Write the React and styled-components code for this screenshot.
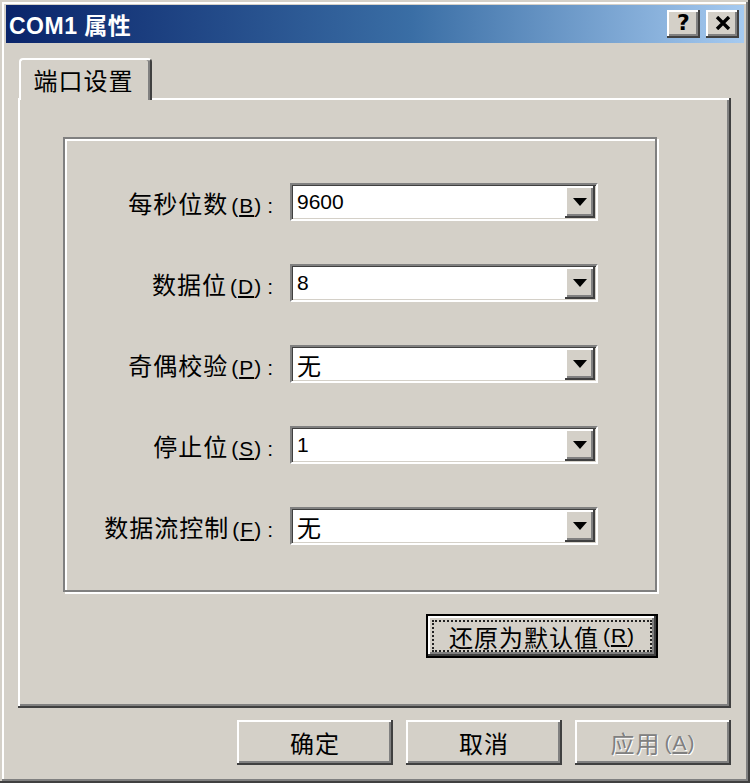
import React from "react";
import styled, { createGlobalStyle, css } from "styled-components";

const Global = createGlobalStyle`
  html, body { margin: 0; padding: 0; background: #d4d0c8; }
  body { font-family: "Liberation Sans", "Noto Sans CJK SC", sans-serif; color: #000; }
  * { box-sizing: border-box; }
`;

const raised = css`
  background: #d4d0c8;
  box-shadow: inset -2px -2px #404040, inset 2px 2px #ffffff,
    inset -4px -4px #808080, inset 4px 4px #d4d0c8;
`;

const Window = styled.div`
  width: 750px;
  height: 783px;
  display: flex;
  flex-direction: column;
  padding: 5px 6px 6px 6px;
  background: #d4d0c8;
  box-shadow: inset -2px -2px #404040, inset 2px 2px #d4d0c8,
    inset -4px -4px #808080, inset 4px 4px #ffffff;
`;

const TitleBar = styled.div`
  height: 38px;
  flex: none;
  display: flex;
  align-items: center;
  padding: 0 5px 0 3px;
  background: linear-gradient(to right, #0a246a 0%, #3a6ea5 55%, #a6caf0 100%);
`;

const Title = styled.div`
  flex: 1;
  color: #fff;
  font-weight: bold;
  font-size: 23px;
  letter-spacing: 0.5px;
  font-family: "Liberation Sans", "Noto Sans CJK SC", sans-serif;
`;

const CaptionButtons = styled.div`
  display: flex;
  gap: 6px;
`;

const CaptionButton = styled.div`
  ${raised};
  width: 33px;
  height: 28px;
  display: flex;
  align-items: center;
  justify-content: center;
  font-weight: bold;
  font-size: 22px;
  font-family: "DejaVu Sans", sans-serif;
  line-height: 1;
  padding-bottom: 2px;
`;

const Body = styled.div`
  flex: 1;
  display: flex;
  flex-direction: column;
  padding: 15px 13px 0 12px;
`;

const TabStrip = styled.div`
  display: flex;
  position: relative;
  z-index: 1;
  margin-bottom: -2px;
`;

const Tab = styled.div`
  width: 133px;
  height: 42px;
  margin-left: 1px;
  background: #d4d0c8;
  border-radius: 4px 4px 0 0;
  border-top: 2px solid #fff;
  border-left: 2px solid #fff;
  border-right: 2px solid #404040;
  box-shadow: inset -2px 0 #808080;
  display: flex;
  align-items: center;
  justify-content: center;
  font-family: "Noto Sans CJK SC", sans-serif;
  font-size: 24px;
  letter-spacing: 1px;
  padding: 0 4px 2px 0;
`;

const Panel = styled.div`
  height: 610px;
  flex: none;
  display: flex;
  flex-direction: column;
  padding: 39px 74px 50px 45px;
  box-shadow: inset -2px -2px #404040, inset 2px 2px #ffffff,
    inset -4px -4px #808080;
`;

const GroupBox = styled.div`
  border: 2px solid #808080;
  box-shadow: inset 2px 2px #fff, 2px 2px #fff;
  padding: 44px 57px 45px 0;
  display: grid;
  grid-template-columns: 1fr 308px;
  column-gap: 16px;
  row-gap: 43px;
  align-items: center;
`;

const Label = styled.label`
  justify-self: end;
  font-family: "Noto Sans CJK SC", sans-serif;
  font-size: 24px;
  letter-spacing: 1px;
  white-space: nowrap;
`;

const Key = styled.span`
  font-family: "Liberation Sans", sans-serif;
  font-size: 21px;
  margin-left: ${(p) => p.$gap ?? 3}px;
  letter-spacing: 1px;
  & u { text-underline-offset: 2px; }
`;

const Colon = styled.span`
  font-family: "Liberation Sans", sans-serif;
  font-size: 21px;
  margin-left: 5px;
`;

const Combo = styled.div`
  height: 38px;
  border: 2px solid;
  border-color: #808080 #ffffff #ffffff #808080;
  background: #fff;
  display: flex;
  box-shadow: inset 1px 1px #404040, inset -1px -1px #d4d0c8;
  padding: 1px;
`;

const ComboValue = styled.div`
  flex: 1;
  display: flex;
  align-items: center;
  padding-left: 4px;
  font-size: ${(p) => (p.$cjk ? 24 : 21)}px;
  font-family: "Liberation Sans", "Noto Sans CJK SC", sans-serif;
`;

const DropButton = styled.div`
  ${raised};
  width: 30px;
  display: flex;
  align-items: center;
  justify-content: center;
`;

const ActionRow = styled.div`
  display: flex;
  justify-content: flex-end;
  margin-top: 22px;
  margin-right: -1px;
`;

const PushButton = styled.div`
  ${raised};
  width: ${(p) => p.$w || 156}px;
  height: ${(p) => p.$h || 45}px;
  display: flex;
  align-items: center;
  justify-content: center;
  font-family: "Noto Sans CJK SC", sans-serif;
  font-size: 24px;
  letter-spacing: 1px;
  ${(p) =>
    p.$disabled &&
    css`
      color: #808080;
      text-shadow: 1px 1px #fff;
    `}
  ${(p) =>
    p.$focused &&
    css`
      border: 2px solid #000;
      padding: 4px;
    `}
`;

const FocusRect = styled.span`
  flex: 1;
  align-self: stretch;
  display: flex;
  align-items: center;
  justify-content: center;
  border: 2px dotted #222;
`;

const Footer = styled.div`
  display: flex;
  justify-content: flex-end;
  gap: 13px;
  margin-top: 12px;
`;

const Arrow = () => (
  <svg width="14" height="8" viewBox="0 0 14 8">
    <polygon points="0,0 14,0 7,8" fill="#000" />
  </svg>
);

const CloseGlyph = () => (
  <svg width="16" height="14" viewBox="0 0 16 14">
    <path d="M2 1 L14 13 M14 1 L2 13" stroke="#000" strokeWidth="3.4" />
  </svg>
);

const rows = [
  { label: "每秒位数", key: "B", value: "9600" },
  { label: "数据位", key: "D", value: "8" },
  { label: "奇偶校验", key: "P", value: "无", cjk: true },
  { label: "停止位", key: "S", value: "1" },
  { label: "数据流控制", key: "F", value: "无", cjk: true },
];

export default function App() {
  return (
    <>
      <Global />
      <Window>
        <TitleBar>
          <Title>COM1 属性</Title>
          <CaptionButtons>
            <CaptionButton>?</CaptionButton>
            <CaptionButton>
              <CloseGlyph />
            </CaptionButton>
          </CaptionButtons>
        </TitleBar>
        <Body>
          <TabStrip>
            <Tab>端口设置</Tab>
          </TabStrip>
          <Panel>
            <GroupBox>
              {rows.map((r) => (
                <React.Fragment key={r.key}>
                  <Label>
                    {r.label}
                    <Key>
                      (<u>{r.key}</u>)
                    </Key>
                    <Colon>:</Colon>
                  </Label>
                  <Combo>
                    <ComboValue $cjk={r.cjk}>{r.value}</ComboValue>
                    <DropButton>
                      <Arrow />
                    </DropButton>
                  </Combo>
                </React.Fragment>
              ))}
            </GroupBox>
            <ActionRow>
              <PushButton $w={232} $h={44} $focused>
                <FocusRect>
                  还原为默认值
                  <Key $gap={4}>
                    (<u>R</u>)
                  </Key>
                </FocusRect>
              </PushButton>
            </ActionRow>
          </Panel>
          <Footer>
            <PushButton>确定</PushButton>
            <PushButton>取消</PushButton>
            <PushButton $disabled>
              应用
              <Key $gap={4}>
                (<u>A</u>)
              </Key>
            </PushButton>
          </Footer>
        </Body>
      </Window>
    </>
  );
}
